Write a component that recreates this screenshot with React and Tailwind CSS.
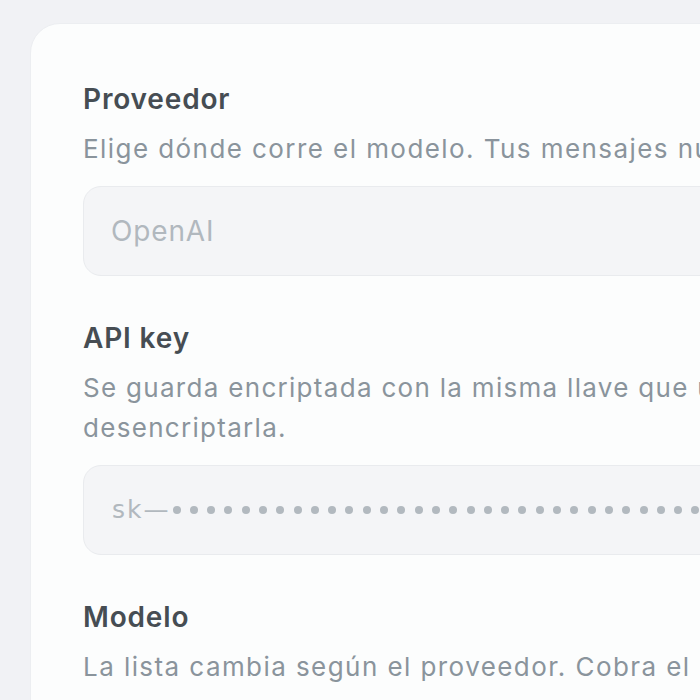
const Field = ({ title, children, last }) => (
    <div className={last ? "" : "mb-[44px]"}>
        <h2 className="text-[28px] leading-[36px] font-semibold tracking-[0.03em] text-[#464d53]">{title}</h2>
        {children}
    </div>
);

const App = () => {
    // masked key dots
    const dots = Array.from({ length: 36 });

    return (
        <div
            className="h-[700px] w-full overflow-hidden bg-[#f1f2f5] pt-[23px] pl-[30px]"
            style={{ fontFamily: "Inter, 'Noto Sans', sans-serif" }}
        >
            <div className="w-[1100px] min-h-[800px] rounded-[30px] border border-[#eceef1] bg-[#fcfdfd] pl-[52px] pt-[57px]">
                <Field title="Proveedor">
                    <p className="mt-3 text-[26px] leading-[40px] tracking-[0.055em] text-[#8a949c] whitespace-nowrap">
                        Elige dónde corre el modelo. Tus mensajes nunca salen de tu dispositivo sin tu permiso.
                    </p>
                    <div className="mt-[17px] flex h-[90px] w-[900px] items-center rounded-[18px] border border-[#e9ebee] bg-[#f4f5f7] px-[27px]">
                        <span className="text-[28px] tracking-[0.03em] text-[#b1b8be]">OpenAI</span>
                    </div>
                </Field>

                <Field title="API key">
                    <p className="mt-3 text-[26px] leading-[40px] tracking-[0.05em] text-[#8a949c] whitespace-nowrap">
                        Se guarda encriptada con la misma llave que usa tu cuenta, así que nadie más puede
                        <br />
                        desencriptarla.
                    </p>
                    <div className="mt-[17px] flex h-[90px] w-[900px] items-center overflow-hidden rounded-[18px] border border-[#e9ebee] bg-[#f4f5f7] px-[28px]">
                        <span
                            className="whitespace-nowrap text-[25px] tracking-[2px] text-[#b1b8be]"
                            style={{ fontFamily: "'DejaVu Sans', sans-serif" }}
                        >
                            sk—
                        </span>
                        <div className="ml-[2px] flex items-center gap-[9.3px]" aria-hidden="true">
                            {dots.map((_, i) => (
                                <span key={i} className="h-[8px] w-[8px] shrink-0 rounded-full bg-[#b2b9bf]" />
                            ))}
                        </div>
                    </div>
                </Field>

                <Field title="Modelo" last>
                    <p className="mt-3 text-[26px] leading-[40px] tracking-[0.055em] text-[#8a949c] whitespace-nowrap">
                        La lista cambia según el proveedor. Cobra el proveedor, no nosotros.
                    </p>
                </Field>
            </div>
        </div>
    );
};

export default App;
